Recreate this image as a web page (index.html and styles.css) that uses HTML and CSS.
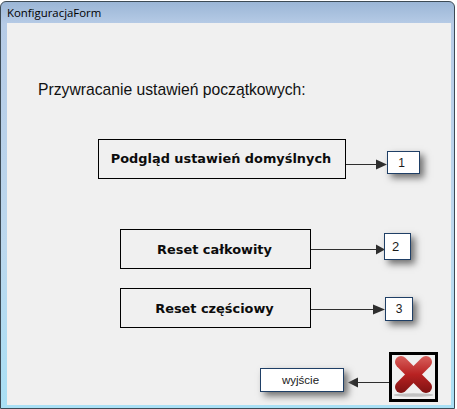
FILE: index.html
```html
<!DOCTYPE html>
<html lang="pl">
<head>
<meta charset="utf-8">
<title>KonfiguracjaForm</title>
<link rel="stylesheet" href="styles.css">
</head>
<body>
<div class="window">
  <div class="titlebar">KonfiguracjaForm</div>
  <main class="canvas">
    <h1 class="heading">Przywracanie ustawień początkowych:</h1>
    <button class="action action-preview">Podgląd ustawień domyślnych</button>
    <button class="action action-full">Reset całkowity</button>
    <button class="action action-partial">Reset częściowy</button>
    <svg class="arrows" width="444" height="382" viewBox="0 0 444 382">
      <g class="arrow-line">
        <line x1="339" y1="141.5" x2="372" y2="141.5"/>
        <line x1="304" y1="226.5" x2="370" y2="226.5"/>
        <line x1="304" y1="286.5" x2="368" y2="286.5"/>
        <line x1="382" y1="359.5" x2="348" y2="359.5"/>
      </g>
      <g class="arrow-head">
        <polygon points="369,136.5 380,141.5 369,146.5"/>
        <polygon points="369,221.5 378,226.5 369,231.5"/>
        <polygon points="366,281.5 378,286.5 366,291.5"/>
        <polygon points="351,354.5 341,359.5 351,364.5"/>
      </g>
    </svg>
    <div class="tag tag-1">1</div>
    <div class="tag tag-2">2</div>
    <div class="tag tag-3">3</div>
    <div class="tag tag-exit">wyjście</div>
    <div class="close-box">
      <svg width="43" height="44" viewBox="0 0 43 44">
        <defs>
          <linearGradient id="red" gradientUnits="userSpaceOnUse" x1="0" y1="1" x2="0" y2="38">
            <stop offset="0" stop-color="#d8605c"/>
            <stop offset="0.5" stop-color="#b82222"/>
            <stop offset="1" stop-color="#7e1212"/>
          </linearGradient>
        </defs>
        <ellipse cx="21.5" cy="40" rx="20" ry="1.8" fill="#c2c2c2"/>
        <g class="cross" stroke="url(#red)">
          <line x1="9" y1="7" x2="34" y2="32"/>
          <line x1="34" y1="7" x2="9" y2="32"/>
        </g>
      </svg>
    </div>
  </main>
</div>
</body>
</html>
```
FILE: styles.css
```css
html, body {
  margin: 0;
  padding: 0;
  background: #ffffff;
}

.window {
  box-sizing: border-box;
  width: 455px;
  height: 408px;
  margin-top: 1px;
  padding: 0 3px 2px 6px;
  display: flex;
  flex-direction: column;
  border: 1px solid #3c4a55;
  border-radius: 6px 6px 0 0;
  background: linear-gradient(to bottom, #9bb6d6 0, #b6cbe6 22px, #bcd8ee 60%, #a9e0f5 100%);
}

.titlebar {
  flex: none;
  height: 21px;
  font: 11.4px/22px "Open Sans", "Noto Sans", sans-serif;
  color: #000000;
}

.canvas {
  position: relative;
  flex: none;
  width: 444px;
  height: 382px;
  background: #f0f0f0;
}

.heading {
  position: absolute;
  left: 31px;
  top: 57px;
  margin: 0;
  font: 400 15.7px/20px "Liberation Sans", Arial, sans-serif;
  color: #111111;
  white-space: nowrap;
}

.action {
  position: absolute;
  box-sizing: border-box;
  height: 40px;
  padding: 0;
  background: #f0f0f0;
  border: 1px solid #000000;
  font: 700 12.9px "DejaVu Sans", Verdana, sans-serif;
  color: #0c0c0c;
}

.action-preview { left: 91px; top: 116px; width: 248px; padding-bottom: 2px; padding-right: 2px; }
.action-full { left: 113px; top: 206px; width: 191px; padding-right: 2px; }
.action-partial { left: 113px; top: 265px; width: 191px; padding-right: 2px; }

.arrows {
  position: absolute;
  left: 0;
  top: 0;
}

.arrow-line line {
  stroke: #2e2e2e;
  stroke-width: 1;
}

.arrow-head polygon {
  fill: #2e2e2e;
}

.tag {
  position: absolute;
  box-sizing: border-box;
  display: flex;
  align-items: center;
  justify-content: center;
  background: #ffffff;
  border: 1px solid #1f3f66;
  box-shadow: 4px 4px 7px #707070;
  font: 12px "Liberation Sans", Arial, sans-serif;
  color: #1a1a1a;
}

.tag-1 { left: 380px; top: 128px; width: 33px; height: 23px; padding-right: 4px; }
.tag-2 { left: 377px; top: 210px; width: 27px; height: 27px; padding-right: 4px; font-size: 13px; }
.tag-3 { left: 378px; top: 274px; width: 28px; height: 24px; }
.tag-exit { left: 253px; top: 345px; width: 84px; height: 24px; font-size: 11.5px; padding-right: 3px; }

.close-box {
  position: absolute;
  box-sizing: border-box;
  left: 382px;
  top: 329px;
  width: 49px;
  height: 50px;
  border: 3px solid #000000;
  background: #f0f0f0;
}

.close-box svg {
  display: block;
}

.cross line {
  stroke-width: 12;
  stroke-linecap: round;
}
```
